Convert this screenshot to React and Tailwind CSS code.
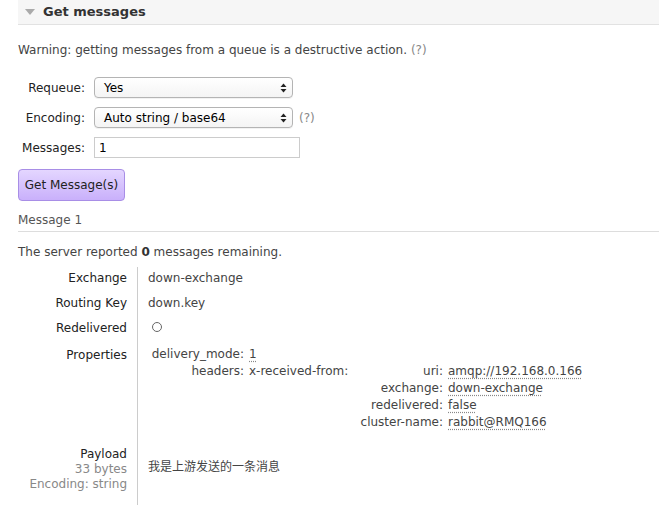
import React from "react";

const font = { fontFamily: '"DejaVu Sans", "Noto Sans CJK SC", sans-serif' };

function SelectBox({ value, width }) {
  return (
    <div
      className={`relative flex items-center h-[21px] ${width} rounded-[4px] border border-[#b4b4b4] bg-gradient-to-b from-white to-[#f4f4f4] pl-[9px] text-[12px] text-black shadow-[0_1px_0_rgba(0,0,0,0.05)]`}
    >
      {value}
      <svg
        className="absolute right-[5px] top-[5px]"
        width="7"
        height="10"
        viewBox="0 0 7 10"
      >
        <path d="M3.5 0.5 L6.5 4 L0.5 4 Z" fill="#222" />
        <path d="M3.5 9.5 L6.5 6 L0.5 6 Z" fill="#222" />
      </svg>
    </div>
  );
}

function Dotted({ children }) {
  return (
    <span className="underline decoration-dotted decoration-[#888] underline-offset-[3px]">
      {children}
    </span>
  );
}

export default function App() {
  const rows = [
    ["Exchange", "down-exchange"],
    ["Routing Key", "down.key"],
  ];
  const received = [
    ["uri:", "amqp://192.168.0.166"],
    ["exchange:", "down-exchange"],
    ["redelivered:", "false"],
    ["cluster-name:", "rabbit@RMQ166"],
  ];

  return (
    <div style={font} className="w-[659px] h-[505px] bg-white pl-[18px] text-[12px] text-[#444] overflow-hidden">
      <div className="flex items-center h-[25px] bg-[#f6f6f6] border-b border-[#e2e2e2] pl-[7px]">
        <svg width="10" height="6" viewBox="0 0 10 6">
          <path d="M0 0 L10 0 L5 6 Z" fill="#aaa" />
        </svg>
        <span className="ml-[8px] text-[13px] font-bold text-[#333]">Get messages</span>
      </div>

      <p className="mt-[17px] leading-[16px]">
        Warning: getting messages from a queue is a destructive action.{" "}
        <span className="text-[#888]">(?)</span>
      </p>

      <div className="mt-[19px] grid grid-cols-[67px_auto] gap-x-[9px] gap-y-[9px] items-center w-fit">
        <span className="text-right text-[#222]">Requeue:</span>
        <SelectBox value="Yes" width="w-[199px]" />
        <span className="text-right text-[#222]">Encoding:</span>
        <div className="flex items-center gap-[6px]">
          <SelectBox value="Auto string / base64" width="w-[199px]" />
          <span className="text-[#888]">(?)</span>
        </div>
        <span className="text-right text-[#222]">Messages:</span>
        <div className="flex items-center h-[21px] w-[206px] border border-[#ccc] bg-white pl-[4px] text-black">
          1
        </div>
      </div>

      <button className="mt-[11px] h-[32px] w-[107px] rounded-[4px] border border-[#a88ee6] bg-gradient-to-b from-[#e4d6ff] to-[#c9b0fb] text-[12px] text-[#222]">
        Get Message(s)
      </button>

      <div className="mt-[12px] h-[19px] border-b border-[#ddd] leading-[15px] text-[#555]">
        Message 1
      </div>

      <p className="mt-[12px] leading-[16px]">
        The server reported <b className="text-[#333]">0</b> messages remaining.
      </p>

      <div className="mt-[7px] grid grid-cols-[119px_auto] w-fit">
        {rows.map(([k, v]) => (
          <React.Fragment key={k}>
            <div className="pr-[10px] text-right text-[#222] h-[25px] pt-[2px]">{k}</div>
            <div className="border-l border-[#ccc] pl-[10px] h-[25px] pt-[2px]">{v}</div>
          </React.Fragment>
        ))}
        <div className="pr-[10px] text-right text-[#222] h-[26px] pt-[2px]">Redelivered</div>
        <div className="border-l border-[#ccc] pl-[14px] h-[26px] pt-[2px]">
          <span className="inline-block w-[10px] h-[10px] rounded-full border border-[#666] mt-[3px]" />
        </div>

        <div className="pr-[10px] text-right text-[#222] pt-[3px]">Properties</div>
        <div className="border-l border-[#ccc] pl-[11px] pt-[3px] pb-[14px] leading-[17px]">
          <div className="grid grid-cols-[95px_auto] gap-x-[5px]">
            <span className="text-right">delivery_mode:</span>
            <span>
              <Dotted>1</Dotted>
            </span>
            <span className="text-right">headers:</span>
            <div className="flex">
              <span className="w-[105px]">x-received-from:</span>
              <div className="grid grid-cols-[89px_auto] gap-x-[5px]">
                {received.map(([k, v]) => (
                  <React.Fragment key={k}>
                    <span className="text-right whitespace-nowrap">{k}</span>
                    <span>
                      <Dotted>{v}</Dotted>
                    </span>
                  </React.Fragment>
                ))}
              </div>
            </div>
          </div>
        </div>

        <div className="pr-[10px] text-right leading-[15px] pt-[2px] pb-[14px]">
          <div className="text-[#222]">Payload</div>
          <div className="text-[#888]">33 bytes</div>
          <div className="text-[#888]">Encoding: string</div>
        </div>
        <div className="border-l border-[#ccc] pl-[10px] pt-[13px]">我是上游发送的一条消息</div>
      </div>
    </div>
  );
}
